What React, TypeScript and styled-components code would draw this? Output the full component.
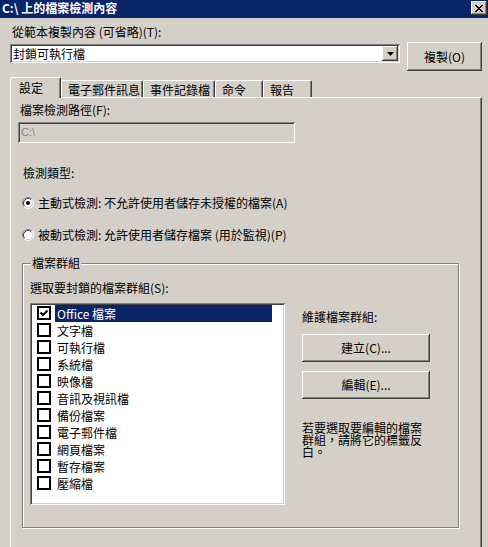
import React from "react";
import styled, { createGlobalStyle } from "styled-components";

const GlobalStyle = createGlobalStyle`
  html, body { margin: 0; padding: 0; background: #d4d0c8; }
  body {
    font-family: "Noto Sans CJK TC", "Noto Sans", sans-serif;
    font-size: 12px;
    color: #000;
  }
  * { box-sizing: border-box; }
`;

const raised = `
  background: #d4d0c8;
  box-shadow: inset -1px -1px #404040, inset 1px 1px #ffffff,
    inset -2px -2px #808080, inset 2px 2px #d4d0c8;
`;

const sunken = `
  box-shadow: inset 1px 1px #808080, inset -1px -1px #ffffff,
    inset 2px 2px #404040, inset -2px -2px #d4d0c8;
`;

const Window = styled.div`
  width: 488px;
  height: 547px;
  overflow: hidden;
  background: #d4d0c8;
  display: flex;
  flex-direction: column;
`;

const TitleBar = styled.div`
  height: 18px;
  flex-shrink: 0;
  background: #0a246a;
  display: flex;
  justify-content: space-between;
  align-items: flex-start;
  padding: 0 1px 0 2px;
`;

const TitleText = styled.div`
  color: #fff;
  font-weight: bold;
  font-size: 12px;
  line-height: 12px;
  margin-top: 2px;
`;

const CloseButton = styled.div`
  ${raised}
  width: 16px;
  height: 14px;
  margin-top: 1px;
  display: flex;
  align-items: center;
  justify-content: center;
`;

const Body = styled.div`
  padding: 0 6px 0 10px;
  display: flex;
  flex-direction: column;
`;

const Label = styled.div<{ $mt?: number; $ml?: number }>`
  line-height: 12px;
  height: 12px;
  white-space: nowrap;
  margin-top: ${(p) => p.$mt ?? 0}px;
  margin-left: ${(p) => p.$ml ?? 0}px;
`;

const TemplateRow = styled.div`
  display: flex;
  align-items: flex-start;
  gap: 7px;
  margin-top: 4px;
`;

const Combo = styled.div`
  ${sunken}
  background: #fff;
  width: 390px;
  height: 19px;
  margin-top: 2px;
  padding: 2px;
  display: flex;
  align-items: stretch;
`;

const ComboText = styled.div`
  flex: 1;
  line-height: 15px;
  padding-left: 1px;
  font-size: 12px;
`;

const DropButton = styled.div`
  ${raised}
  width: 16px;
  display: flex;
  align-items: center;
  justify-content: center;
`;

const PushButton = styled.div<{ $w: number; $h: number }>`
  ${raised}
  width: ${(p) => p.$w}px;
  height: ${(p) => p.$h}px;
  display: flex;
  align-items: center;
  justify-content: center;
  line-height: 12px;
  flex-shrink: 0;
`;

const TabRow = styled.div`
  display: flex;
  align-items: flex-end;
  margin-top: 6px;
  height: 20px;
`;

const Tab = styled.div<{ $w: number; $active?: boolean }>`
  width: ${(p) => p.$w}px;
  height: ${(p) => (p.$active ? 21 : 17)}px;
  margin-bottom: ${(p) => (p.$active ? -1 : 0)}px;
  padding: ${(p) => (p.$active ? "4px 0 0 8px" : "3px 0 0 6px")};
  background: #d4d0c8;
  border-top: 1px solid #fff;
  border-left: 1px solid #fff;
  border-right: 1px solid #404040;
  border-top-left-radius: 2px;
  border-top-right-radius: 2px;
  box-shadow: inset -1px 0 #808080;
  line-height: 12px;
  white-space: nowrap;
  position: relative;
  z-index: ${(p) => (p.$active ? 1 : 0)};
`;

const Panel = styled.div`
  width: 472px;
  height: 470px;
  flex-shrink: 0;
  border-top: 1px solid #fff;
  border-left: 1px solid #fff;
  border-right: 1px solid #404040;
  box-shadow: inset -1px 0 #808080;
  padding: 6px 0 0 7px;
  display: flex;
  flex-direction: column;
  align-items: flex-start;
`;

const DisabledField = styled.div`
  ${sunken}
  width: 277px;
  height: 21px;
  margin-top: 6px;
  padding: 4px 0 0 3px;
  color: #808080;
  line-height: 12px;
  font-size: 11px;
  font-family: "Liberation Sans", "Noto Sans CJK TC", sans-serif;
`;

const RadioRow = styled.div<{ $mt: number }>`
  display: flex;
  align-items: center;
  gap: 4px;
  height: 13px;
  margin-top: ${(p) => p.$mt}px;
  margin-left: 4px;
  line-height: 12px;
  white-space: nowrap;
`;

const GroupBox = styled.div`
  position: relative;
  width: 437px;
  height: 265px;
  margin-top: 22px;
  margin-left: 4px;
  border: 1px solid #808080;
  box-shadow: inset 1px 1px #fff, 1px 1px #fff;
  padding: 18px 0 0 7px;
`;

const GroupTitle = styled.div`
  position: absolute;
  top: -7px;
  left: 8px;
  padding: 0 1px;
  background: #d4d0c8;
  line-height: 12px;
`;

const GroupContent = styled.div`
  display: flex;
  align-items: flex-start;
  gap: 17px;
  margin-top: 9px;
`;

const ListBox = styled.div`
  ${sunken}
  background: #fff;
  width: 255px;
  height: 202px;
  padding: 2px;
  display: flex;
  flex-direction: column;
`;

const ListRow = styled.div`
  display: flex;
  align-items: flex-start;
  height: 17px;
`;

const CheckBox = styled.div`
  width: 14px;
  height: 14px;
  margin: 1px 0 0 5px;
  border: 2px solid #000;
  background: #fff;
  display: flex;
  align-items: center;
  justify-content: center;
  flex-shrink: 0;
`;

const ItemLabel = styled.div<{ $selected?: boolean }>`
  width: 217px;
  height: 17px;
  margin-left: 4px;
  padding-left: 2px;
  line-height: 17px;
  background: ${(p) => (p.$selected ? "#0a246a" : "transparent")};
  color: ${(p) => (p.$selected ? "#fff" : "#000")};
  white-space: nowrap;
`;

const SideColumn = styled.div`
  display: flex;
  flex-direction: column;
  align-items: flex-start;
  padding-top: 8px;
`;

const HelpText = styled.div`
  width: 122px;
  margin-top: 23px;
  line-height: 12px;
`;

const Radio = ({ checked }: { checked?: boolean }) => (
  <svg width="12" height="12" viewBox="0 0 12 12">
    <circle cx="6" cy="6" r="5" fill="#fff" />
    <path d="M2.11 9.89 A5.5 5.5 0 0 1 9.89 2.11" stroke="#808080" fill="none" />
    <path d="M9.89 2.11 A5.5 5.5 0 0 1 2.11 9.89" stroke="#ffffff" fill="none" />
    <path d="M2.82 9.18 A4.5 4.5 0 0 1 9.18 2.82" stroke="#404040" fill="none" />
    <path d="M9.18 2.82 A4.5 4.5 0 0 1 2.82 9.18" stroke="#d4d0c8" fill="none" />
    {checked && <circle cx="6" cy="6" r="2" fill="#000" />}
  </svg>
);

const items = [
  "Office 檔案",
  "文字檔",
  "可執行檔",
  "系統檔",
  "映像檔",
  "音訊及視訊檔",
  "備份檔案",
  "電子郵件檔",
  "網頁檔案",
  "暫存檔案",
  "壓縮檔",
];

const tabs = [
  { label: "設定", w: 51, active: true },
  { label: "電子郵件訊息", w: 82 },
  { label: "事件記錄檔", w: 72 },
  { label: "命令", w: 48 },
  { label: "報告", w: 49 },
];

export default function App() {
  return (
    <>
      <GlobalStyle />
      <Window>
        <TitleBar>
          <TitleText>C:\ 上的檔案檢測內容</TitleText>
          <CloseButton>
            <svg width="8" height="7" viewBox="0 0 8 7">
              <path d="M0 0 L7 7 M1 0 L8 7 M7 0 L0 7 M8 0 L1 7" stroke="#000" strokeWidth="1" />
            </svg>
          </CloseButton>
        </TitleBar>
        <Body>
          <Label $mt={8} $ml={2}>從範本複製內容 (可省略)(T):</Label>
          <TemplateRow>
            <Combo>
              <ComboText>封鎖可執行檔</ComboText>
              <DropButton>
                <svg width="7" height="4" viewBox="0 0 7 4">
                  <path d="M0 0 H7 L3.5 4 Z" fill="#000" />
                </svg>
              </DropButton>
            </Combo>
            <PushButton $w={75} $h={29}>複製(O)</PushButton>
          </TemplateRow>
          <TabRow>
            {tabs.map((t) => (
              <Tab key={t.label} $w={t.w} $active={t.active}>
                {t.label}
              </Tab>
            ))}
          </TabRow>
          <Panel>
            <Label $ml={2}>檔案檢測路徑(F):</Label>
            <DisabledField>C:\</DisabledField>
            <Label $mt={24} $ml={5}>檢測類型:</Label>
            <RadioRow $mt={17}>
              <Radio checked />
              <span>主動式檢測: 不允許使用者儲存未授權的檔案(A)</span>
            </RadioRow>
            <RadioRow $mt={19}>
              <Radio />
              <span>被動式檢測: 允許使用者儲存檔案 (用於監視)(P)</span>
            </RadioRow>
            <GroupBox>
              <GroupTitle>檔案群組</GroupTitle>
              <Label>選取要封鎖的檔案群組(S):</Label>
              <GroupContent>
                <ListBox>
                  {items.map((it, i) => (
                    <ListRow key={it}>
                      <CheckBox>
                        {i === 0 && (
                          <svg width="8" height="8" viewBox="0 0 8 8">
                            <path d="M0.5 3.5 L3 6 L7.5 1.5" stroke="#000" strokeWidth="2" fill="none" />
                          </svg>
                        )}
                      </CheckBox>
                      <ItemLabel $selected={i === 0}>{it}</ItemLabel>
                    </ListRow>
                  ))}
                </ListBox>
                <SideColumn>
                  <Label>維護檔案群組:</Label>
                  <PushButton $w={128} $h={28} style={{ marginTop: 11 }}>建立(C)...</PushButton>
                  <PushButton $w={128} $h={28} style={{ marginTop: 9 }}>編輯(E)...</PushButton>
                  <HelpText>若要選取要編輯的檔案群組，請將它的標籤反白。</HelpText>
                </SideColumn>
              </GroupContent>
            </GroupBox>
          </Panel>
        </Body>
      </Window>
    </>
  );
}
